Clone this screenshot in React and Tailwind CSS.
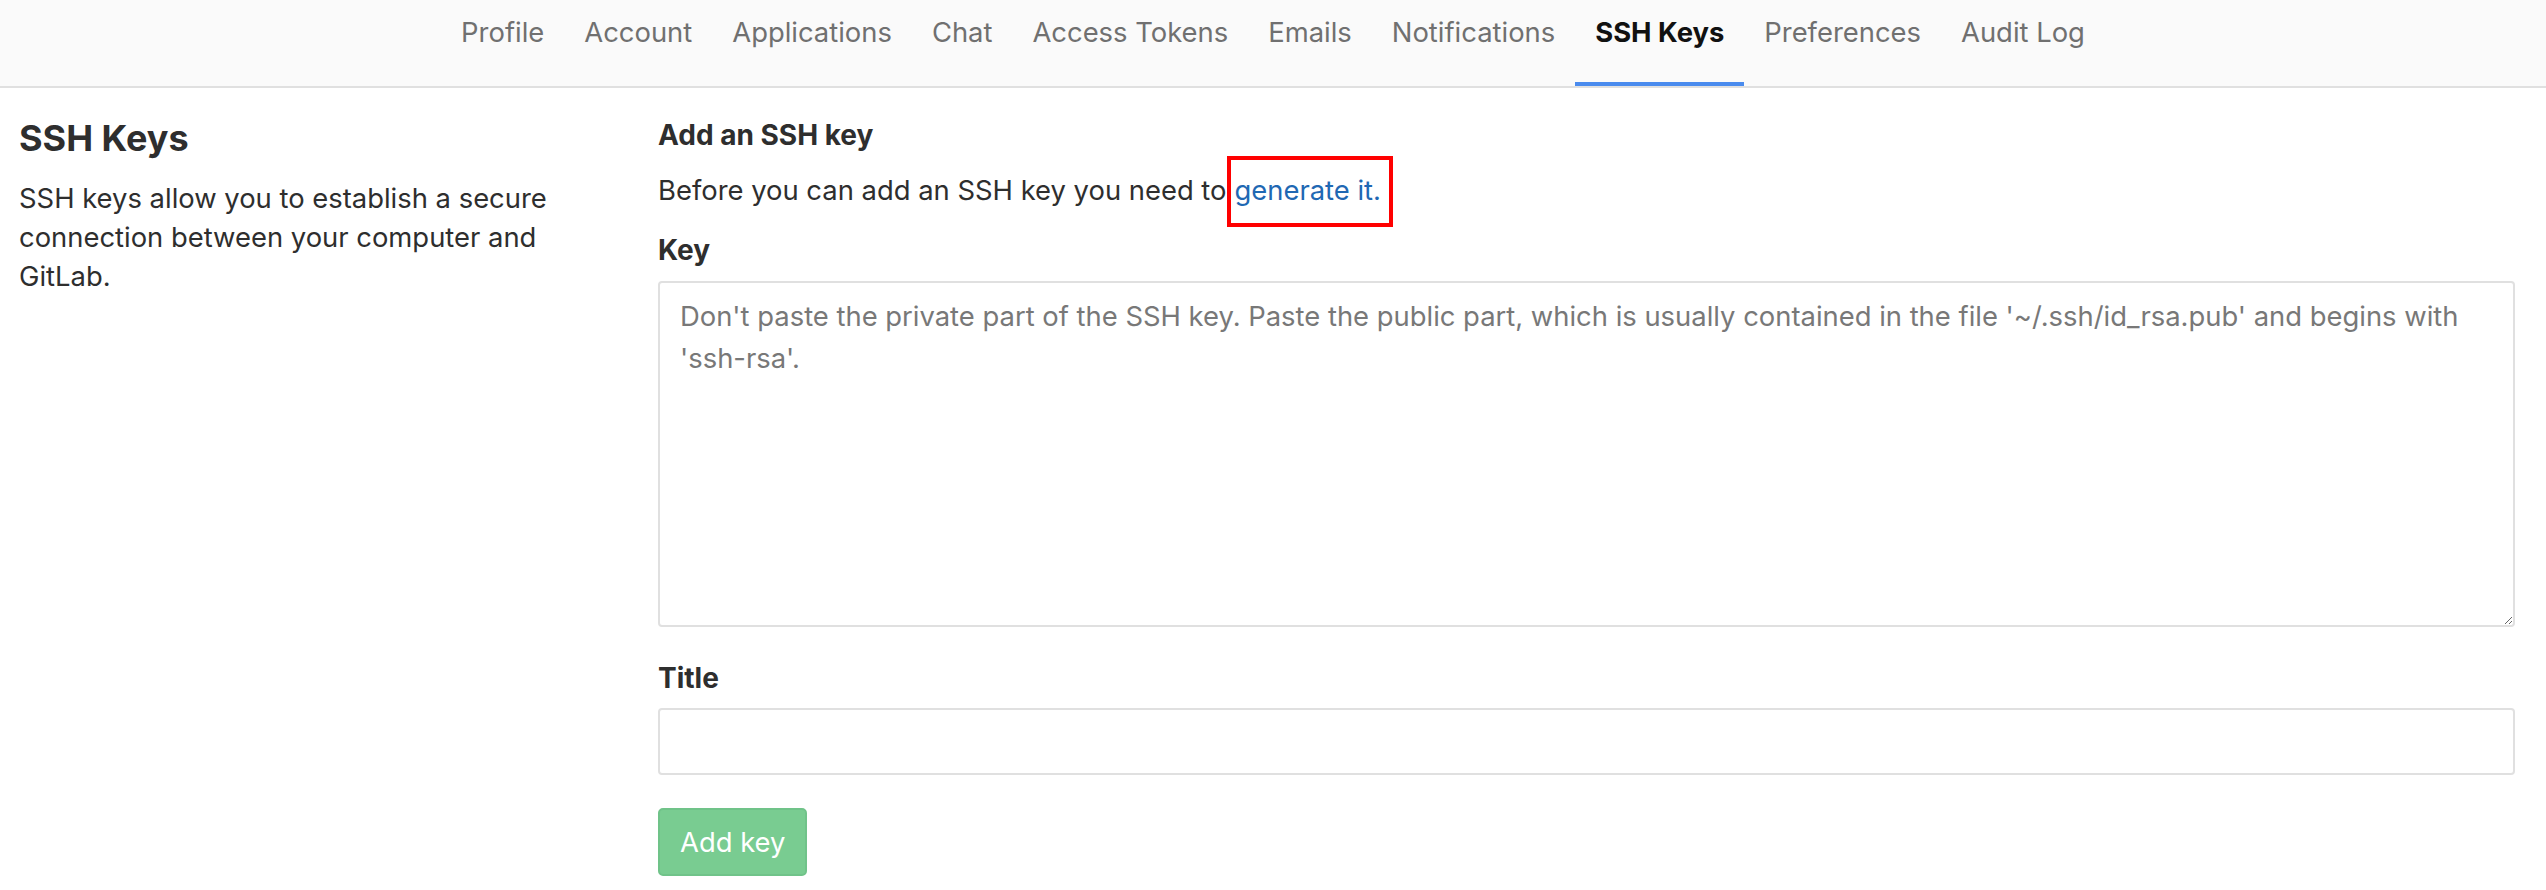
import React from "react";

const tabs = ["Profile", "Account", "Applications", "Chat", "Access Tokens", "Emails", "Notifications", "SSH Keys", "Preferences", "Audit Log"];

function App() {
	return (
		<div className="min-h-screen bg-white text-[#2e2e2e] font-['Inter',sans-serif] text-[27.4px] leading-[40px]">
			{/* top tabs */}
			<nav className="h-[88px] bg-[#fafafa] border-b-2 border-[#e0e0e0] flex justify-center">
				{tabs.map((tab) => (
					<a
						key={tab}
						href="#"
						className={
							tab === "SSH Keys"
								? "px-[20px] pt-[12px] h-[86px] font-bold text-[#111] border-b-4 border-[#4a8bee]"
								: "px-[20px] pt-[12px] h-[86px] text-[#707070]"
						}
					>
						{tab}
					</a>
				))}
			</nav>

			<div className="flex pl-[19px] pr-[31px]">
				{/* left column */}
				<div className="w-[639px] shrink-0 pt-[29px]">
					<h4 className="text-[36px] leading-[42px] font-bold">SSH Keys</h4>
					<p className="mt-[20px] w-[590px] leading-[39px]">SSH keys allow you to establish a secure connection between your computer and GitLab.</p>
				</div>

				{/* right column */}
				<div className="flex-1 pt-[27px]">
					<h5 className="font-bold text-[28px]">Add an SSH key</h5>
					<p className="mt-[15px]">
						Before you can add an SSH key you need to
						<a href="#" className="text-[#1f68b3] border-4 border-[#ff0000] pl-[4px] pr-[8px] pt-[13px] pb-[16px]">
							generate it.
						</a>
					</p>
					<label className="block mt-[20px] font-bold text-[28px]">Key</label>
					<textarea
						className="block mt-[11px] w-full h-[346px] border-2 border-[#e0e0e0] rounded-[4px] px-[20px] pt-[12px] leading-[42px] placeholder:text-[#787878]"
						placeholder="Don't paste the private part of the SSH key. Paste the public part, which is usually contained in the file '~/.ssh/id_rsa.pub' and begins with 'ssh-rsa'."
					/>
					<label className="block mt-[31px] font-bold text-[28px]">Title</label>
					<input type="text" className="block mt-[10px] w-full h-[67px] border-2 border-[#e0e0e0] rounded-[4px] px-[20px]" />
					<button className="mt-[33px] h-[68px] px-[20px] bg-[#79cc91] border-2 border-[#70c389] rounded-[5px] text-white">Add key</button>
				</div>
			</div>
		</div>
	);
}

export default App;
